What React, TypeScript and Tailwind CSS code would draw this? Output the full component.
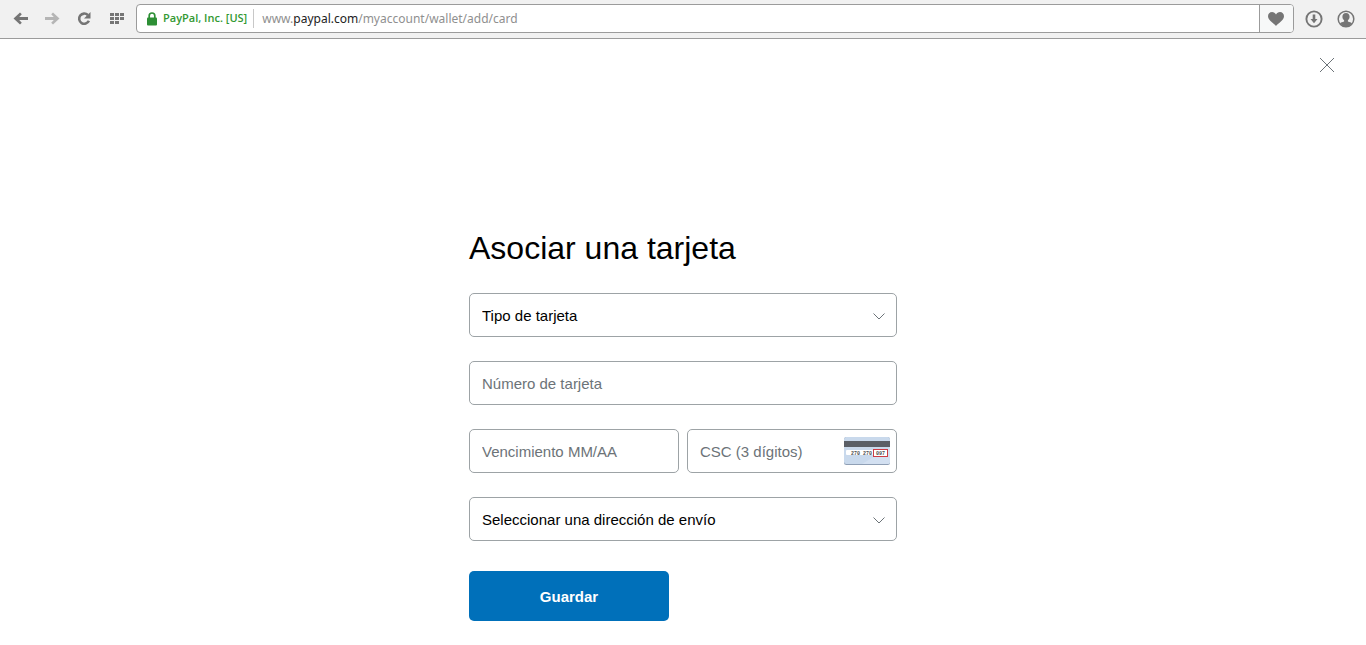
import type { ReactNode, SelectHTMLAttributes } from "react";

const fieldBox =
  "h-11 w-full rounded-[5px] border border-[#9da3a6] bg-white px-3 text-[15px] leading-5 outline-none focus:border-[#0070ba]";

function ToolbarButton({ label, children }: { label: string; children: ReactNode }) {
  return (
    <button type="button" aria-label={label} className="flex h-8 w-8 shrink-0 items-center justify-center text-[#757575]">
      {children}
    </button>
  );
}

function BrowserToolbar() {
  return (
    <header className="flex h-[39px] items-center border-b border-[#9b9b9b] bg-[#f1f1f1] pb-px">
      <nav aria-label="Navegación" className="flex items-center px-1">
        <ToolbarButton label="Atrás">
          <svg width="16" height="16" viewBox="0 0 16 16" fill="currentColor">
            <path d="M1.500 7.500 8 1.500l1.800 1.800L7.200 6H16v3H7.200l2.600 2.700L8 13.500z" />
          </svg>
        </ToolbarButton>
        <ToolbarButton label="Adelante">
          <svg width="16" height="16" viewBox="0 0 16 16" fill="#b5b5b5">
            <path d="M15.500 7.500 9 1.500 7.200 3.300 9.800 6H1v3h8.800l-2.600 2.700L9 13.500z" />
          </svg>
        </ToolbarButton>
        <ToolbarButton label="Recargar">
          <svg width="16" height="16" viewBox="0 0 16 16">
            <path d="M11.800 4A5.100 5.100 0 1 0 12.900 9.800" fill="none" stroke="currentColor" strokeWidth="2.600" />
            <path d="M14.500 1v6.500H8z" fill="currentColor" />
          </svg>
        </ToolbarButton>
        <ToolbarButton label="Acceso rápido">
          <svg width="16" height="16" viewBox="0 0 16 16" fill="currentColor">
            {[2, 6, 10].map((y) =>
              [2, 7, 12]
                .filter((x) => x < 12 || y < 10)
                .map((x) => <rect key={`${x}-${y}`} x={x} y={y} width="4" height="3" />),
            )}
          </svg>
        </ToolbarButton>
      </nav>

      <div className="flex h-[29px] min-w-0 flex-1 items-stretch overflow-hidden rounded-[4px] border border-[#9b9b9b] bg-white text-[12px]">
        <div className="my-1 flex items-center border-r border-[#c8c8c8] pl-[10px] pr-[6px] font-['Open_Sans','Noto_Sans',sans-serif] text-[11px] font-semibold text-[#339933]">
          <svg width="10" height="14" viewBox="0 0 10 14" className="mr-[6px] text-[#2d8f35]">
            <path d="M2.200 6V3.800a2.800 2.800 0 0 1 5.600 0V6" fill="none" stroke="currentColor" strokeWidth="1.700" />
            <rect y="5.500" width="10" height="8" rx="1" fill="currentColor" />
          </svg>
          <span className="whitespace-nowrap">PayPal, Inc. [US]</span>
        </div>
        <div
          role="textbox"
          aria-label="Dirección"
          contentEditable
          suppressContentEditableWarning
          spellCheck={false}
          className="min-w-0 flex-1 truncate pl-2 font-['Noto_Sans','Open_Sans',sans-serif] leading-[27px] text-[#8f8f8f] outline-none"
        >
          www.<span className="text-[#222222]">paypal.com</span>/myaccount/wallet/add/card
        </div>
        <button
          type="button"
          aria-label="Guardar en favoritos"
          className="flex w-[34px] items-center justify-center border-l border-[#9b9b9b] bg-[#f7f8f8] pr-px text-[#757575]"
        >
          <svg width="16" height="14" viewBox="0 0 16 14">
            <path
              d="M8 14C6.300 11.500 0 8.600 0 4.200 0 1.700 1.800 0 4 0c1.800 0 3.200.900 4 2.500C8.800.900 10.200 0 12 0c2.200 0 4 1.700 4 4.200C16 8.600 9.700 11.500 8 14z"
              fill="currentColor"
            />
          </svg>
        </button>
      </div>

      <div className="flex items-center px-1">
        <ToolbarButton label="Descargas">
          <svg width="18" height="18" viewBox="0 0 18 18">
            <circle cx="9" cy="9" r="7.600" fill="none" stroke="currentColor" strokeWidth="1.900" />
            <path d="M7.700 4.500h2.600v4.500h2.200L9 13.300 5.500 9h2.200z" fill="currentColor" />
          </svg>
        </ToolbarButton>
        <ToolbarButton label="Perfil">
          <svg width="18" height="18" viewBox="0 0 18 18">
            <circle cx="9" cy="9" r="7.800" fill="none" stroke="currentColor" strokeWidth="1.500" />
            <path
              d="M9 3c-2.200 0-3.600 1.600-3.600 3.700 0 1.500.6 2.700 1.700 3.600v1.300c-1.800.5-3.300 1-4.100 1.900A8 8 0 0 0 9 16.800a8 8 0 0 0 6-3.300c-.8-.9-2.300-1.400-4.100-1.900v-1.300c1.100-.9 1.700-2.100 1.700-3.600C12.600 4.600 11.200 3 9 3z"
              fill="currentColor"
            />
          </svg>
        </ToolbarButton>
      </div>
    </header>
  );
}

function SelectField({ label, ...props }: { label: string } & SelectHTMLAttributes<HTMLSelectElement>) {
  return (
    <div className="relative">
      <select aria-label={label} className={`${fieldBox} appearance-none pr-10 pt-px text-black`} {...props}>
        <option>{label}</option>
      </select>
      <svg
        width="12"
        height="7"
        viewBox="0 0 12 7"
        className="pointer-events-none absolute right-3 top-5"
        fill="none"
        stroke="#6c7378"
      >
        <path d="M.5.5 6 6 11.500.5" />
      </svg>
    </div>
  );
}

function TextField({ label, name }: { label: string; name: string }) {
  return (
    <input
      type="text"
      name={name}
      inputMode="numeric"
      aria-label={label}
      placeholder={label}
      className={`${fieldBox} text-black placeholder:text-[#6c7378]`}
    />
  );
}

function CardBack() {
  return (
    <svg
      width="46"
      height="28"
      viewBox="0 0 46 28"
      aria-hidden="true"
      className="pointer-events-none absolute right-[7px] top-2"
    >
      <rect width="46" height="28" rx="2.500" fill="#8f9fb5" />
      <rect width="46" height="27" rx="2.500" fill="#c9d9ec" />
      <path d="M18 27 46 10v15a2 2 0 0 1-2 2z" fill="#d3e0f1" />
      <rect y="4" width="46" height="6" fill="#5b5f66" />
      <rect x="2" y="13" width="27" height="5" rx="1" fill="#ffffff" />
      <rect x="29.500" y="12.500" width="14" height="7" fill="#ffffff" stroke="#cc3b44" />
      <g fill="#4a4a4a" fontFamily="Liberation Mono, monospace" fontSize="5" fontWeight="700">
        <text x="7" y="17.500">270</text>
        <text x="19" y="17.500">270</text>
        <text x="32" y="17.500">097</text>
      </g>
    </svg>
  );
}

export default function App() {
  return (
    <div className="min-h-screen bg-white font-['Liberation_Sans',Arial,sans-serif] text-black">
      <BrowserToolbar />
      <div className="flex justify-end pl-8 pr-[31px] pt-[18px]">
        <button type="button" aria-label="Cerrar" className="flex size-4 items-center justify-center text-[#6c7378]">
          <svg width="16" height="16" viewBox="0 0 16 16" fill="none" stroke="currentColor">
            <path d="M1 1l14 14M15 1 1 15" />
          </svg>
        </button>
      </div>
      <main className="mx-auto w-full max-w-[428px] pb-6 pt-[155px]">
        <h1 className="mb-[25px] text-[32px] leading-10">Asociar una tarjeta</h1>
        <form className="flex flex-col gap-6" onSubmit={(event) => event.preventDefault()}>
          <SelectField label="Tipo de tarjeta" name="type" />
          <TextField label="Número de tarjeta" name="number" />
          <div className="grid grid-cols-2 gap-2">
            <TextField label="Vencimiento MM/AA" name="expiry" />
            <div className="relative">
              <TextField label="CSC (3 dígitos)" name="csc" />
              <CardBack />
            </div>
          </div>
          <SelectField label="Seleccionar una dirección de envío" name="address" />
          <button
            type="submit"
            className="mt-[6px] h-[50px] w-[200px] rounded-[5px] bg-[#0070ba] pt-[2px] text-[15px] font-bold text-white"
          >
            Guardar
          </button>
        </form>
      </main>
    </div>
  );
}
